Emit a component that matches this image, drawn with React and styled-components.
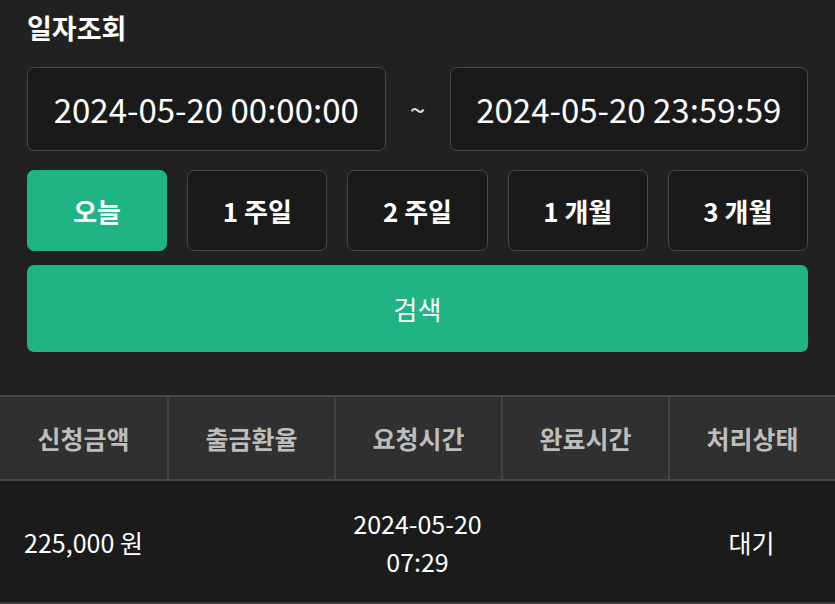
import React, { useState } from 'react';
import styled, { createGlobalStyle } from 'styled-components';

const GlobalStyle = createGlobalStyle`
  html, body {
    margin: 0;
    padding: 0;
    background: #212121;
  }
  body {
    font-family: 'Noto Sans CJK KR', 'Noto Sans', sans-serif;
    color: #fff;
  }
  * { box-sizing: border-box; }
`;

const periods = ['오늘', '1 주일', '2 주일', '1 개월', '3 개월'];
const columns = ['신청금액', '출금환율', '요청시간', '완료시간', '처리상태'];

export default function App() {
  const [active, setActive] = useState(0);

  return (
    <Page>
      <GlobalStyle />
      <Filter>
        <Title>일자조회</Title>
        <DateRow>
          <DateBox>2024-05-20 00:00:00</DateBox>
          <Tilde>~</Tilde>
          <DateBox>2024-05-20 23:59:59</DateBox>
        </DateRow>
        <PeriodRow>
          {periods.map((p, i) => (
            <PeriodButton key={p} $active={i === active} onClick={() => setActive(i)}>
              {p}
            </PeriodButton>
          ))}
        </PeriodRow>
        <SearchButton>검색</SearchButton>
      </Filter>

      <Table>
        <HeaderRow>
          {columns.map((c) => (
            <HeadCell key={c}>{c}</HeadCell>
          ))}
        </HeaderRow>
        <BodyRow>
          <Cell>225,000 원</Cell>
          <Cell></Cell>
          <Cell>
            <span>2024-05-20</span>
            <span>07:29</span>
          </Cell>
          <Cell></Cell>
          <Cell>대기</Cell>
        </BodyRow>
      </Table>
    </Page>
  );
}

const Page = styled.div`
  width: 835px;
  min-height: 604px;
  background: #212121;
`;

const Filter = styled.div`
  padding: 10px 27px 0;
  display: flex;
  flex-direction: column;
`;

const Title = styled.h2`
  margin: 0;
  font-size: 27px;
  font-weight: 700;
  line-height: 36px;
  color: #fff;
`;

const DateRow = styled.div`
  display: flex;
  align-items: center;
  margin-top: 21px;
`;

const DateBox = styled.div`
  flex: 1;
  height: 84px;
  display: flex;
  align-items: center;
  justify-content: center;
  background: #1a1a1a;
  border: 1.5px solid #484848;
  border-radius: 7px;
  font-size: 33px;
  color: #fff;
`;

const Tilde = styled.div`
  width: 64px;
  text-align: center;
  font-size: 28px;
  color: #ddd;
`;

const PeriodRow = styled.div`
  display: grid;
  grid-template-columns: repeat(5, 1fr);
  gap: 20px;
  margin-top: 19px;
`;

const PeriodButton = styled.button`
  height: 81px;
  border-radius: 7px;
  border: 1.5px solid ${(p) => (p.$active ? '#20b384' : '#484848')};
  background: ${(p) => (p.$active ? '#20b384' : '#1a1a1a')};
  color: #fff;
  font-family: inherit;
  font-size: 26px;
  font-weight: 700;
  cursor: pointer;
`;

const SearchButton = styled.button`
  margin-top: 14px;
  height: 87px;
  border: none;
  border-radius: 7px;
  background: #20b384;
  color: #fff;
  font-family: inherit;
  font-size: 26px;
  font-weight: 400;
  cursor: pointer;
`;

const Table = styled.div`
  margin-top: 43px;
  width: 100%;
`;

const HeaderRow = styled.div`
  display: grid;
  grid-template-columns: repeat(5, 1fr);
  height: 86px;
  background: #303030;
  border-top: 2px solid #474747;
  border-bottom: 2px solid #474747;
`;

const HeadCell = styled.div`
  display: flex;
  align-items: center;
  justify-content: center;
  font-size: 25px;
  font-weight: 700;
  color: #bdbdbd;
  & + & {
    border-left: 2px solid #434343;
  }
`;

const BodyRow = styled.div`
  display: grid;
  grid-template-columns: repeat(5, 1fr);
  height: 123px;
  background: #1b1b1b;
  border-bottom: 2px solid #3a3a3a;
`;

const Cell = styled.div`
  display: flex;
  flex-direction: column;
  align-items: center;
  justify-content: center;
  font-size: 25px;
  line-height: 38px;
  color: #fff;
`;
